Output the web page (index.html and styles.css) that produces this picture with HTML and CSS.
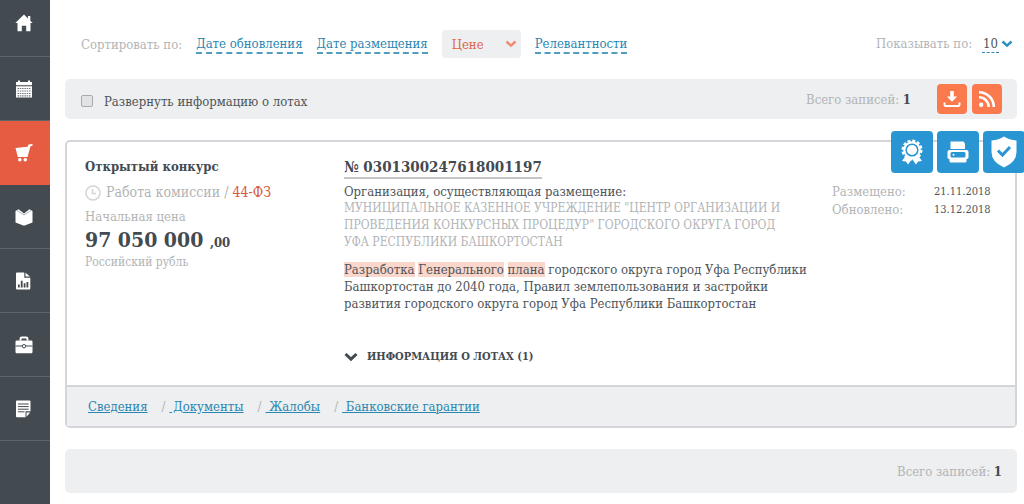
FILE: index.html
```
<!DOCTYPE html>
<html lang="ru">

<head>
    <meta charset="UTF-8">
    <meta name="viewport" content="width=device-width, initial-scale=1.0">
    <title>Закупки</title>
    <link rel="stylesheet" href="styles.css">
</head>

<body>
    <nav class="sidebar">
        <a href="#" aria-label="Главная">
            <svg width="18" height="18" viewBox="0 0 18 18"><path d="M9 0.5L0.3 9h2.2v8.2h4.3v-5.4h4.4v5.4h4.3V9h2.2l-2.4-2.3V2h-2.3v2.4z" fill="#fff"/></svg>
        </a>
        <a href="#" aria-label="Календарь">
            <svg width="18" height="18" viewBox="0 0 18 18">
                <path d="M1 2h2V0.5h2V2h8V0.5h2V2h2v3.300H1z" fill="#fff"/>
                <path d="M1 6.300h16V17.500H1z" fill="#fff"/>
                <path d="M2.500 8.500h13M2.500 11h13M2.500 13.500h13M2.500 15.800h13" stroke="#6f757a" stroke-width="1.200" stroke-dasharray="1.500 0.800"/>
            </svg>
        </a>
        <a href="#" class="active" aria-label="Закупки">
            <svg width="18" height="18" viewBox="0 0 18 18" fill="#fff">
                <path d="M0.500 4L12.700 2.800l0.800-2.200L17.500 0v1.800l-2 0.500-3 10.800H2.800z"/>
                <circle cx="4.800" cy="15.700" r="1.800"/><circle cx="10.300" cy="15.700" r="1.800"/>
            </svg>
        </a>
        <a href="#" aria-label="Справочник">
            <svg width="18" height="18" viewBox="0 0 18 18"><path d="M0.500 3L3.500 1.200 9 5.500l5.500-4.300 3 1.800v11.500L9 17.800 0.500 14.500z" fill="#fff"/><path d="M2 2.500L9 7l7-4.500" fill="none" stroke="#9da1a4" stroke-width="0.800"/></svg>
        </a>
        <a href="#" aria-label="Отчёты">
            <svg width="18" height="18" viewBox="0 0 18 18">
                <path d="M1 1.500Q1 0.500 2 0.500h7.300v5.200h6v10.800q0 1-1 1H2q-1 0-1-1z" fill="#fff"/>
                <path d="M10.500 0.800l4.500 3.700h-4.500z" fill="#fff"/>
                <path d="M3.800 15.500v-3M6.700 15.500V8.800M9.600 15.500v-4.200M12.400 15.500V10" stroke="#434a50" stroke-width="1.800"/>
            </svg>
        </a>
        <a href="#" aria-label="Портфель">
            <svg width="18" height="18" viewBox="0 0 18 18">
                <path d="M5.500 4.500V2.800q0-1.300 1.300-1.300h4.400q1.300 0 1.300 1.300v1.700" fill="none" stroke="#fff" stroke-width="2"/>
                <rect x="0.500" y="4.500" width="17" height="12.700" rx="1.200" fill="#fff"/>
                <path d="M0.500 10h17" stroke="#434a50" stroke-width="1"/>
                <circle cx="9" cy="10.200" r="1.700" fill="#fff" stroke="#434a50"/>
            </svg>
        </a>
        <a href="#" aria-label="Заметки">
            <svg width="18" height="18" viewBox="0 0 18 18">
                <path d="M1 1.300Q1 0.500 2 0.500h12.500q1 0 1 1v9.800h-5v6H2q-1 0-1-1z" fill="#fff"/>
                <path d="M11.500 12.500h3.700l-3.700 4.200z" fill="#fff"/>
                <path d="M3 4h10.700M3 6.600h10.700M3 9.200h10.700M3 11.800h6.500" stroke="#434a50" stroke-width="1"/>
            </svg>
        </a>
    </nav>

    <main class="content">
        <div class="sorting">
            <span class="muted">Сортировать по:</span>
            <a href="#" class="dashed">Дате обновления</a>
            <a href="#" class="dashed">Дате размещения</a>
            <button class="sort-active">Цене
                <svg width="12" height="8" viewBox="0 0 12 8"><path d="M1.500 1.500L6 5.700l4.500-4.200" fill="none" stroke="#f08a72" stroke-width="2.400"/></svg>
            </button>
            <a href="#" class="dashed">Релевантности</a>
            <div class="per-page">
                <span class="muted">Показывать по:</span>
                <button class="count"><span>10</span>
                    <svg width="12" height="8" viewBox="0 0 12 8"><path d="M1.500 1.500L6 5.700l4.500-4.200" fill="none" stroke="#2a8ebf" stroke-width="2.400"/></svg>
                </button>
            </div>
        </div>

        <div class="panel">
            <label class="expand"><input type="checkbox">Развернуть информацию о лотах</label>
            <span class="total">Всего записей: <b>1</b></span>
            <div class="tools">
                <button aria-label="Скачать">
                    <svg width="18" height="18" viewBox="0 0 18 18">
                        <path d="M7.200 1h3.600v5.500h3.400L9 11.800 3.800 6.500h3.400z" fill="#fff"/>
                        <path d="M1.500 12.500v2.300q0 1.200 1.200 1.200h12.600q1.200 0 1.200-1.200v-2.300" fill="none" stroke="#fff" stroke-width="2"/>
                    </svg>
                </button>
                <button aria-label="RSS">
                    <svg width="18" height="18" viewBox="0 0 18 18">
                        <circle cx="3.200" cy="14.800" r="2.200" fill="#fff"/>
                        <path d="M1 7.300a9.700 9.700 0 0 1 9.700 9.700M1 2.200a14.800 14.800 0 0 1 14.800 14.800" fill="none" stroke="#fff" stroke-width="2.600"/>
                    </svg>
                </button>
            </div>
        </div>

        <article class="card">
            <div class="actions">
                <button aria-label="Сертификат">
                    <svg width="26" height="28" viewBox="0 0 26 28">
                        <path d="M8 16l-5 7 4 .6 2 3 4-5.600 4 5.600 2-3 4-.6L18 16z" fill="#fff"/>
                        <circle cx="13" cy="12" r="8.800" fill="#fff"/>
                        <circle cx="13" cy="12" r="9.300" fill="none" stroke="#fff" stroke-width="2.400" stroke-dasharray="3 1.870"/>
                        <circle cx="13" cy="12" r="5.800" fill="#fff" stroke="#2996d3" stroke-width="1.500"/>
                    </svg>
                </button>
                <button aria-label="Печать">
                    <svg width="26" height="28" viewBox="0 0 26 28">
                        <path d="M5.500 3.500h13l1.500 2V11H5.500z" fill="#fff"/>
                        <path d="M4.500 12h17q2 0 2 2v5.500q0 1.500-2 1.500v2q0 1.500-1.500 1.500H6Q4.500 24.500 4.500 23v-2q-2 0-2-1.500V14q0-2 2-2z" fill="#fff"/>
                        <rect x="5.500" y="14" width="15" height="5.500" rx="1.500" fill="#2996d3"/>
                        <circle cx="8.500" cy="16.700" r="1" fill="#fff"/>
                    </svg>
                </button>
                <button aria-label="Проверено">
                    <svg width="26" height="32" viewBox="0 0 26 32">
                        <path d="M13 0.500Q18 4 25.500 4.500V16q0 10-12.500 15.500Q0.500 26 0.500 16V4.500Q8 4 13 0.500z" fill="#fff"/>
                        <path d="M7 14.500l4.500 4.500L19 11" fill="none" stroke="#2996d3" stroke-width="3"/>
                    </svg>
                </button>
            </div>
            <div class="card-body">
                <section class="summary">
                    <h2>Открытый конкурс</h2>
                    <p class="status">
                        <svg width="16" height="16" viewBox="0 0 16 16" fill="none" stroke="#d3d4d5" stroke-width="1.500"><circle cx="8" cy="8" r="7"/><path d="M7.500 4v4.500H11"/></svg>
                        <span>Работа комиссии / <a href="#" class="law">44-ФЗ</a></span>
                    </p>
                    <p class="muted">Начальная цена</p>
                    <p class="price">97 050 000 <small>,00</small></p>
                    <p class="currency">Российский рубль</p>
                </section>
                <section class="details">
                    <h1><a href="#">№ 0301300247618001197</a></h1>
                    <p>Организация, осуществляющая размещение:</p>
                    <p class="customer">МУНИЦИПАЛЬНОЕ КАЗЕННОЕ УЧРЕЖДЕНИЕ "ЦЕНТР ОРГАНИЗАЦИИ И ПРОВЕДЕНИЯ КОНКУРСНЫХ ПРОЦЕДУР" ГОРОДСКОГО ОКРУГА ГОРОД УФА РЕСПУБЛИКИ БАШКОРТОСТАН</p>
                    <p class="subject"><mark>Разработка</mark> <mark>Генерального</mark> <mark>плана</mark> городского округа город Уфа Республики Башкортостан до 2040 года, Правил землепользования и застройки развития городского округа город Уфа Республики Башкортостан</p>
                    <button class="lots">
                        <svg width="14" height="10" viewBox="0 0 14 10"><path d="M1.500 2L7 7.200 12.500 2" fill="none" stroke="#434a50" stroke-width="3"/></svg>
                        ИНФОРМАЦИЯ О ЛОТАХ (1)
                    </button>
                </section>
                <dl class="dates">
                    <dt>Размещено:</dt>
                    <dd>21.11.2018</dd>
                    <dt>Обновлено:</dt>
                    <dd>13.12.2018</dd>
                </dl>
            </div>
            <footer class="card-links">
                <a href="#">Сведения</a>
                <span>/</span>
                <a href="#">&nbsp;Документы</a>
                <span>/</span>
                <a href="#">&nbsp;Жалобы</a>
                <span>/</span>
                <a href="#">&nbsp;Банковские гарантии</a>
            </footer>
        </article>

        <div class="panel panel-bottom">
            <span class="total">Всего записей: <b>1</b></span>
        </div>
    </main>
</body>

</html>
```
FILE: styles.css
```
* {
    box-sizing: border-box;
}

body {
    margin: 0;
    min-height: 100vh;
    display: flex;
    background-color: #fff;
    color: #4d5459;
    font-family: "DejaVu Serif Condensed", "DejaVu Serif", serif;
    font-size: 13px;
    line-height: 17px;
}

h1,
h2,
p,
dl,
dd {
    margin: 0;
}

a {
    color: #2a86b2;
}

button {
    border: none;
    padding: 0;
    background: none;
    color: inherit;
    font: inherit;
    cursor: pointer;
}

svg {
    display: block;
    flex: none;
}

.muted {
    color: #b2b4b6;
}

.sidebar {
    flex: none;
    width: 50px;
    background-color: #434a50;
}

.sidebar a {
    display: flex;
    align-items: center;
    justify-content: center;
    height: 64px;
    padding-right: 2px;
    border-bottom: 1px solid #5d646a;
}

.sidebar a:first-child {
    height: 57px;
    padding-bottom: 10px;
}

.sidebar .active {
    background-color: #e65c43;
    border-color: #e65c43;
}

.content {
    flex: 1;
    min-width: 0;
    padding: 30px 7px 0 15px;
    overflow-x: clip;
}

.sorting {
    display: flex;
    align-items: center;
    gap: 14px;
    height: 28px;
    padding: 0 4px 0 16px;
}

.dashed {
    padding-top: 1px;
    text-decoration: none;
    border-bottom: 2px dashed #4f9dc2;
}

.sort-active {
    display: flex;
    align-items: center;
    justify-content: space-between;
    width: 79px;
    height: 28px;
    padding: 0 4px 0 10px;
    border-radius: 4px;
    background-color: #edeff0;
    color: #e0654c;
}

.per-page {
    display: flex;
    gap: 10px;
    margin-left: auto;
}

.count {
    display: flex;
    align-items: center;
    gap: 2px;
}

.count span {
    padding: 0 1px;
    border-bottom: 1px dashed #2a86b2;
}

.panel {
    display: flex;
    align-items: center;
    height: 40px;
    margin-top: 21px;
    padding: 0 15px;
    border-radius: 5px;
    background-color: #edeff0;
}

.panel-bottom {
    height: 44px;
}

.expand {
    display: flex;
    align-items: center;
    gap: 11px;
    padding: 4px 0 0 1px;
}

.expand input {
    appearance: none;
    width: 12px;
    height: 12px;
    margin: 0;
    border: 1px solid #aaa;
    border-radius: 2px;
    background-color: #e2e3e4;
}

.expand input:checked {
    background-color: #2996d3;
}

.total {
    margin-left: auto;
    color: #b2b4b6;
}

.total b {
    color: #434a50;
}

.tools {
    display: flex;
    gap: 5px;
    margin-left: 26px;
}

.tools button {
    display: flex;
    align-items: center;
    justify-content: center;
    width: 30px;
    height: 30px;
    border-radius: 4px;
    background-color: #fb7a4d;
}

.card {
    position: relative;
    margin-top: 21px;
    border: 2px solid #d3d5db;
    border-radius: 5px;
}

/* buttons hang over the top right corner of the card */
.actions {
    position: absolute;
    top: -11px;
    right: -10px;
    display: flex;
    gap: 4px;
}

.actions button {
    display: flex;
    align-items: center;
    justify-content: center;
    width: 42px;
    height: 42px;
    border-radius: 4px;
    background-color: #2996d3;
}

.card-body {
    display: grid;
    grid-template-columns: 259px 1fr 183px;
    padding: 15px 0 20px 18px;
}

.summary h2 {
    color: #434a50;
    font-size: 13px;
    line-height: 20px;
}

.status {
    display: flex;
    align-items: center;
    gap: 5px;
    margin: 7px 0;
    color: #b2b4b6;
    font-size: 14px;
}

.law {
    color: #d95a43;
    text-decoration: none;
}

.price {
    color: #434a50;
    font-size: 21px;
    line-height: 30px;
    font-weight: bold;
}

.price small {
    font-size: 13px;
}

.currency {
    color: #b2b4b6;
    font-size: 12px;
    line-height: 8px;
}

.details {
    padding-right: 12px;
}

.details h1 {
    margin-bottom: 4px;
    font-size: 15px;
    line-height: 20px;
}

.details h1 a {
    display: inline-block;
    border-bottom: 2px solid #c4c5c7;
    color: #434a50;
    text-decoration: none;
}

.customer {
    padding-right: 20px;
    color: #b2b4b6;
    font-size: 12px;
}

.subject {
    margin-top: 10px;
}

mark {
    background-color: #fbd6cb;
    color: inherit;
}

.lots {
    display: flex;
    align-items: center;
    gap: 9px;
    margin-top: 36px;
    color: #434a50;
    font-size: 11px;
    font-weight: bold;
}

.dates {
    display: grid;
    grid-template-columns: 102px 1fr;
    align-content: start;
    padding-top: 26px;
    line-height: 18px;
}

.dates dt {
    color: #b2b4b6;
}

.dates dd {
    font-size: 11px;
}

.card-links {
    display: flex;
    align-items: center;
    height: 41px;
    padding-left: 21px;
    border-top: 2px solid #d3d5db;
    background-color: #edeff0;
}

.card-links span {
    margin: 0 4px 0 14px;
    color: #b2b4b6;
}
```
